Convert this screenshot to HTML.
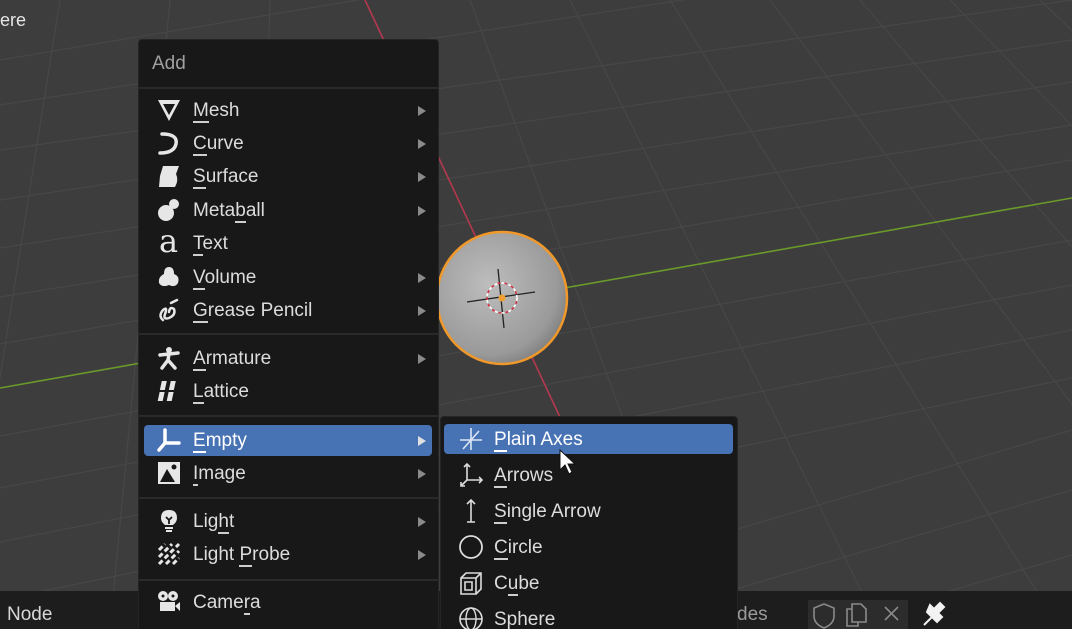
<!DOCTYPE html>
<html><head><meta charset="utf-8">
<style>
*{margin:0;padding:0;box-sizing:border-box}
html,body{width:1072px;height:629px;overflow:hidden}
body{background:#3d3d3d;font-family:"Liberation Sans","DejaVu Sans",sans-serif;position:relative}
svg{position:absolute;left:0;top:0}
.menu{position:absolute;background:#181818;border:1px solid #252525;border-radius:4px}
.it{position:absolute;left:0;height:32px;color:#dcdcdc;font-size:19px;line-height:34px}
.it .lb{position:absolute;left:54px}
.sub .it .lb{left:53px}
.ar{position:absolute;left:279px;top:12px;width:0;height:0;border-top:5px solid transparent;border-bottom:5px solid transparent;border-left:8px solid #8a8a8a}
.sep{position:absolute;left:0;right:0;height:2px;background:#2a2a2a}
.hl{position:absolute;background:#4772b3;border-radius:4px}
.ic{position:absolute;left:18px;top:4px;width:24px;height:24px}
u{text-decoration:none;border-bottom:2px solid #cfcfcf;}
</style></head><body>
<svg width="1072" height="629">
<g stroke="#474747" stroke-width="1.2" fill="none">
<line x1="0" y1="60" x2="1072" y2="-120"/>
<line x1="0" y1="105" x2="1072" y2="-60"/>
<line x1="0" y1="150" x2="1072" y2="0"/>
<line x1="0" y1="200" x2="1072" y2="40"/>
<line x1="0" y1="248" x2="1072" y2="82"/>
<line x1="0" y1="297" x2="1072" y2="125"/>
<line x1="0" y1="344" x2="1072" y2="160"/>
<line x1="0" y1="436" x2="1072" y2="240"/>
<line x1="0" y1="488" x2="1072" y2="285"/>
<line x1="0" y1="542" x2="1072" y2="330"/>
<line x1="0" y1="600" x2="1072" y2="378"/>
<line x1="400" y1="629" x2="1072" y2="430"/>
<line x1="600" y1="629" x2="1072" y2="490"/>
<line x1="820" y1="629" x2="1072" y2="555"/>
<line x1="60" y1="0" x2="-40" y2="629"/>
<line x1="170" y1="0" x2="110" y2="629"/>
<line x1="270" y1="0" x2="250" y2="629"/>
<line x1="470" y1="0" x2="700" y2="629"/>
<line x1="570" y1="0" x2="880" y2="629"/>
<line x1="670" y1="0" x2="1060" y2="629"/>
<line x1="770" y1="0" x2="1240" y2="629"/>
<line x1="860" y1="0" x2="1400" y2="629"/>
<line x1="950" y1="0" x2="1560" y2="629"/>
<line x1="1040" y1="0" x2="1700" y2="629"/>
</g>
<line x1="0" y1="388" x2="1072" y2="198" stroke="#6a9a2a" stroke-width="1.6"/>
<line x1="365" y1="0" x2="580" y2="460" stroke="#b4384e" stroke-width="1.6"/>
<defs><radialGradient id="g" cx="0.4" cy="0.4" r="0.75"><stop offset="0" stop-color="#bdbdbd"/><stop offset="0.7" stop-color="#9a9a9a"/><stop offset="1" stop-color="#6a6a6a"/></radialGradient></defs>
<ellipse cx="502" cy="298" rx="65" ry="66" fill="url(#g)" stroke="#f0982a" stroke-width="2.5"/>
<line x1="467" y1="302" x2="535" y2="292" stroke="#222" stroke-width="1.3"/>
<line x1="498" y1="269" x2="504" y2="328" stroke="#222" stroke-width="1.3"/>
<circle cx="502" cy="298" r="15" fill="none" stroke="#fff" stroke-width="1.6" stroke-dasharray="4 3"/>
<circle cx="502" cy="298" r="15" fill="none" stroke="#d03040" stroke-width="1.6" stroke-dasharray="3 4" stroke-dashoffset="4"/>
<circle cx="502" cy="298" r="3.5" fill="#f0a030"/>
</svg>
<div style="position:absolute;left:0;top:10px;color:#e6e6e6;font-size:18px">ere</div>
<div style="position:absolute;left:0;top:591px;width:1072px;height:38px;background:#1d1d1d"></div>
<div style="position:absolute;left:7px;top:604px;color:#d8d8d8;font-size:19px">Node</div>
<div style="position:absolute;left:737px;top:604px;color:#9a9a9a;font-size:19px">des</div>
<div style="position:absolute;left:808px;top:600px;width:100px;height:29px;background:#2c2c2c"></div>
<svg width="1072" height="629" style="pointer-events:none">
<path d="M824 604 l10 4 v8 q0 8 -10 12 q-10 -4 -10 -12 v-8z" fill="none" stroke="#8a8a8a" stroke-width="1.6"/>
<path d="M852 609 h-5 v17 h11 v-4 M852 604 h9 l5 5 v13 h-14z" fill="none" stroke="#8a8a8a" stroke-width="1.6"/>
<path d="M885 607 l13 13 M898 607 l-13 13" stroke="#8a8a8a" stroke-width="1.6"/>
<path d="M924 625 l8 -8 M927 612 l10 10 l5 -5 l-4 -4 l6 -6 l-4 -4 l-6 6 l-4 -4z" fill="#f2f2f2" stroke="#f2f2f2" stroke-width="2"/>
</svg>

<div class="menu" style="left:138px;top:39px;width:301px;height:600px">
 <div style="position:absolute;left:13px;top:13px;color:#a0a0a0;font-size:19px">Add</div>
 <div class="sep" style="top:47px"></div>
 <div class="it" style="top:54px;width:300px"><svg class="ic" viewBox="0 0 24 24"><path d="M1 2 H23 L12 23Z M6 6 L12 17 L18 6Z" fill="#e6e6e6" fill-rule="evenodd"/></svg><span class="lb"><u>M</u>esh</span><i class="ar"></i></div>
 <div class="it" style="top:87px;width:300px"><svg class="ic" viewBox="0 0 24 24"><path d="M5 3 Q21 3 19 13 Q17 22 3 22" fill="none" stroke="#e6e6e6" stroke-width="3.5" stroke-linecap="round"/></svg><span class="lb"><u>C</u>urve</span><i class="ar"></i></div>
 <div class="it" style="top:120px;width:300px"><svg class="ic" viewBox="0 0 24 24"><path d="M6 2 H22 L19 10 Q22 16 18 23 H2 L3 12 Z" fill="#e6e6e6"/></svg><span class="lb"><u>S</u>urface</span><i class="ar"></i></div>
 <div class="it" style="top:154px;width:300px"><svg class="ic" viewBox="0 0 24 24"><circle cx="9" cy="15" r="8" fill="#e6e6e6"/><circle cx="17" cy="6" r="5" fill="#e6e6e6"/></svg><span class="lb">Meta<u>b</u>all</span><i class="ar"></i></div>
 <div class="it" style="top:187px;width:300px"><span style="position:absolute;left:20px;top:-3px;font-family:'DejaVu Serif',serif;font-size:32px;color:#e6e6e6">a</span><span class="lb"><u>T</u>ext</span></div>
 <div class="it" style="top:221px;width:300px"><svg class="ic" viewBox="0 0 24 24"><path d="M12 2 Q17 2 17 9 Q23 11 21 18 Q18 23 12 20 Q5 23 2 18 Q1 12 7 9 Q7 2 12 2Z" fill="#e6e6e6"/></svg><span class="lb"><u>V</u>olume</span><i class="ar"></i></div>
 <div class="it" style="top:254px;width:300px"><svg class="ic" viewBox="0 0 24 24"><path d="M6 22 Q1 18 6 12 Q11 8 8 16 Q6 22 12 20 Q19 17 17 11 Q13 8 12 14 M14 5 L20 2" fill="none" stroke="#e6e6e6" stroke-width="2.5" stroke-linecap="round"/></svg><span class="lb"><u>G</u>rease Pencil</span><i class="ar"></i></div>
 <div class="sep" style="top:293px"></div>
 <div class="it" style="top:302px;width:300px"><svg class="ic" viewBox="0 0 24 24"><circle cx="12" cy="4" r="3" fill="#e6e6e6"/><path d="M3 9 L21 7 M12 8 L11 14 L5 22 M11 14 L18 22" fill="none" stroke="#e6e6e6" stroke-width="3.5" stroke-linecap="round"/></svg><span class="lb"><u>A</u>rmature</span><i class="ar"></i></div>
 <div class="it" style="top:335px;width:300px"><svg class="ic" viewBox="0 0 24 24"><path d="M5 2h5l-1 9h-5z M14 2h5l-1 9h-5z M4 13h5l-1 9h-5z M13 13h5l-1 9h-5z" fill="#e6e6e6" transform="skewX(-6)"/></svg><span class="lb"><u>L</u>attice</span></div>
 <div class="sep" style="top:375px"></div>
 <div class="hl" style="left:5px;top:385px;width:288px;height:31px"></div>
 <div class="it" style="top:384px;width:300px;color:#fff"><svg class="ic" viewBox="0 0 24 24"><path d="M8 2 V15 L2 22 M8 15 H22" fill="none" stroke="#fff" stroke-width="3.5" stroke-linecap="round"/></svg><span class="lb"><u style="border-color:#fff">E</u>mpty</span><i class="ar" style="border-left-color:#e0e0e0"></i></div>
 <div class="it" style="top:417px;width:300px"><svg class="ic" viewBox="0 0 24 24"><rect x="1" y="1" width="22" height="22" fill="#e6e6e6"/><path d="M3 21 L10 8 L18 21Z" fill="#181818"/><circle cx="17" cy="6" r="2.5" fill="#181818"/></svg><span class="lb"><u>I</u>mage</span><i class="ar"></i></div>
 <div class="sep" style="top:457px"></div>
 <div class="it" style="top:465px;width:300px"><svg class="ic" viewBox="0 0 24 24"><path d="M12 1 Q20 1 20 9 Q20 13 16 16 H8 Q4 13 4 9 Q4 1 12 1Z" fill="#e6e6e6"/><path d="M9 8 L12 11 L15 8 M12 11 V15" stroke="#181818" stroke-width="1.8" fill="none"/><rect x="8" y="18" width="8" height="2" fill="#e6e6e6"/><rect x="9" y="21" width="6" height="2" fill="#e6e6e6"/></svg><span class="lb">Lig<u>h</u>t</span><i class="ar"></i></div>
 <div class="it" style="top:498px;width:300px"><svg class="ic" viewBox="0 0 24 24"><path d="M2 8 L8 2 M2 15 L15 2 M2 22 L22 2 M9 22 L22 9 M16 22 L22 16" stroke="#e6e6e6" stroke-width="3" stroke-dasharray="5 3"/></svg><span class="lb">Light <u>P</u>robe</span><i class="ar"></i></div>
 <div class="sep" style="top:539px"></div>
 <div class="it" style="top:546px;width:300px"><svg class="ic" viewBox="0 0 24 24"><circle cx="6" cy="6" r="5" fill="#e6e6e6"/><circle cx="16" cy="6" r="5" fill="#e6e6e6"/><circle cx="6" cy="6" r="1.5" fill="#181818"/><circle cx="16" cy="6" r="1.5" fill="#181818"/><rect x="3" y="12" width="15" height="9" fill="#e6e6e6"/><path d="M18 16 L23 12 V21Z" fill="#e6e6e6"/></svg><span class="lb">Came<u>r</u>a</span></div>
</div>

<div class="menu sub" style="left:440px;top:416px;width:298px;height:230px">
 <div class="hl" style="left:3px;top:7px;width:289px;height:30px"></div>
 <div class="it" style="top:6px;width:298px;color:#fff"><svg class="ic" viewBox="0 0 24 24"><path d="M12 1 V23 M1 13 H23 M4 22 L20 4" stroke="#dde6f5" stroke-width="1.6"/></svg><span class="lb"><u style="border-color:#fff">P</u>lain Axes</span></div>
 <div class="it" style="top:42px;width:298px"><svg class="ic" viewBox="0 0 24 24"><path d="M8 1 V17 L2 23 M8 17 H23 M5 4 L8 1 L11 4 M20 14 L23 17 L20 20 M2 19 V23 H6" fill="none" stroke="#dcdcdc" stroke-width="1.6"/></svg><span class="lb"><u>A</u>rrows</span></div>
 <div class="it" style="top:78px;width:298px"><svg class="ic" viewBox="0 0 24 24"><path d="M12 1 V23 M8 5 L12 1 L16 5 M8 23 H16" fill="none" stroke="#dcdcdc" stroke-width="1.6"/></svg><span class="lb"><u>S</u>ingle Arrow</span></div>
 <div class="it" style="top:114px;width:298px"><svg class="ic" viewBox="0 0 24 24"><circle cx="12" cy="12" r="11" fill="none" stroke="#dcdcdc" stroke-width="1.8"/></svg><span class="lb"><u>C</u>ircle</span></div>
 <div class="it" style="top:150px;width:298px"><svg class="ic" viewBox="0 0 24 24"><path d="M2 7 H17 V23 H2Z M2 7 L7 2 H22 V18 L17 23 M17 7 L22 2 M6 11 H13 V19 H6Z" fill="none" stroke="#dcdcdc" stroke-width="1.6"/></svg><span class="lb">C<u>u</u>be</span></div>
 <div class="it" style="top:186px;width:298px"><svg class="ic" viewBox="0 0 24 24"><circle cx="12" cy="12" r="11" fill="none" stroke="#dcdcdc" stroke-width="1.6"/><ellipse cx="12" cy="12" rx="5" ry="11" fill="none" stroke="#dcdcdc" stroke-width="1.4"/><path d="M1 12 H23" stroke="#dcdcdc" stroke-width="1.4"/></svg><span class="lb">Sphere</span></div>
</div>
<svg width="1072" height="629" style="pointer-events:none"><path d="M560 450 V470 L565 465 L569 474 L572 472 L568 464 L575 464Z" fill="#fff" stroke="#111" stroke-width="1"/></svg>
</body></html>
